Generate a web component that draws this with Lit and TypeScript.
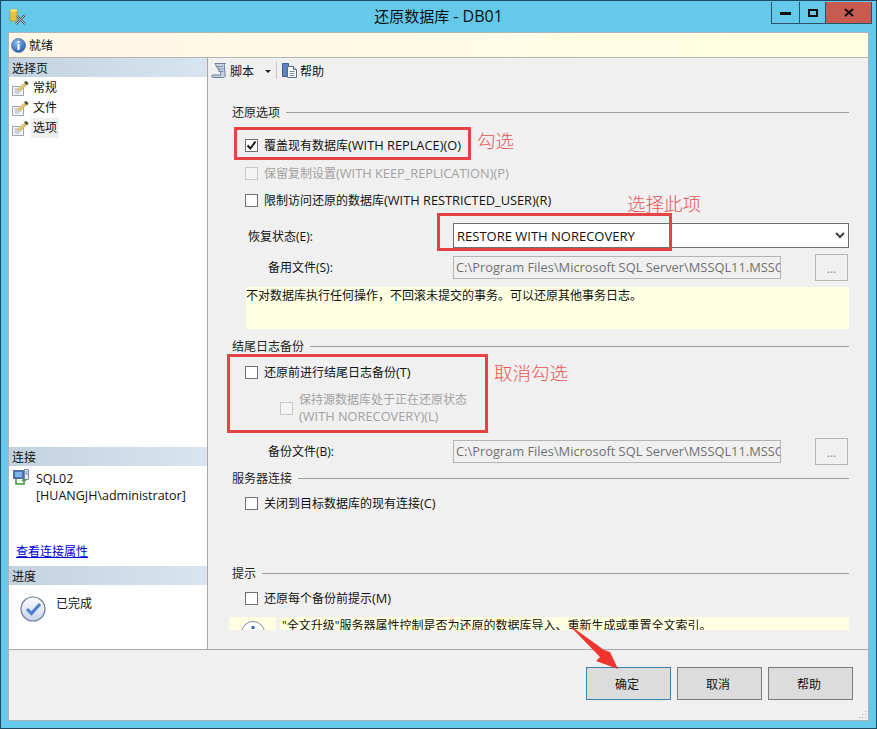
import { LitElement, html, css, svg } from "lit";
import { customElement } from "lit/decorators.js";

const navIcon = svg`<svg width="17" height="15" viewBox="0 0 17 15">
  <path d="M.5 5.500h11v9H.5z" fill="#f6f8fa" stroke="#97a2ac"/>
  <path d="M2.500 8h7M2.500 10h7M2.500 12h5" stroke="#a4adb6"/>
  <path d="M5 8.500 10.500 3l3-1.500 1 2.500-5.500 5.500-3 .5z" fill="#dcbc62"/>
  <path d="M6.500 8.500 12 3.500" stroke="#f2e09c" stroke-width=".8"/>
  <path d="M12 1l2-1 2.500 2-1.500 2.500z" fill="#4e4c30"/>
</svg>`;

const check = svg`<svg width="11" height="11" viewBox="0 0 11 11"><path d="M1.500 5.500 4.300 8.500 9.500 1.500" fill="none" stroke="#1a1a1a" stroke-width="2"/></svg>`;

const chevron = svg`<svg width="10" height="7" viewBox="0 0 10 7"><path d="M1 1l4 4 4-4" fill="none" stroke="#404040" stroke-width="2"/></svg>`;

/* Latin runs read a little larger than the CJK ones in the reference. */
const mixed = (s: string) =>
  s.split(/([\u0000-\u024f]+)/).map((p) => (/[A-Za-z0-9]/.test(p) ? html`<span class="la">${p}</span>` : p));

@customElement("app-root")
export class AppRoot extends LitElement {
  static styles = css`
    :host {
      display: block;
      width: 877px;
      height: 729px;
      position: relative;
      overflow: hidden;
      font-family: "Open Sans", "Noto Sans CJK SC", sans-serif;
      font-size: 12px;
      color: #111;
    }
    .la { font-size: 12.8px; }
    .win {
      width: 877px;
      height: 729px;
      box-sizing: border-box;
      background: #65c9ea;
      border: 1px solid #1c4a60;
      display: flex;
      flex-direction: column;
      padding: 0 7px 7px 7px;
    }
    .title {
      height: 31px;
      flex: none;
      display: flex;
      align-items: flex-start;
      position: relative;
      margin: 0 -7px;
      padding-left: 8px;
    }
    .app-ico { margin-top: 7px; }
    .title-text {
      position: absolute;
      left: 0;
      right: 0;
      top: 5px;
      text-align: center;
      font-size: 15px;
      line-height: 20px;
      color: #111;
    }
    .title-text .la { font-size: 16px; }
    .ctl {
      position: absolute;
      top: 1px;
      right: 4px;
      display: flex;
      height: 21px;
      border: 1px solid #2a5468;
      border-top: none;
    }
    .ctl div {
      display: flex;
      align-items: center;
      justify-content: center;
      box-sizing: border-box;
    }
    .ctl .min { width: 28px; border-right: 1px solid #2a5468; }
    .ctl .max { width: 26px; border-right: 1px solid #2a5468; }
    .ctl .close { width: 45px; background: #c75b50; }
    .client {
      flex: 1;
      background: #f0f0f0;
      border: 1px solid #a9b5bb;
      display: flex;
      flex-direction: column;
      min-height: 0;
    }
    .status {
      height: 25px;
      flex: none;
      box-sizing: border-box;
      background: linear-gradient(90deg, #fff6e6 0, #fffbe4 60%, #ffffe1 85%);
      border-bottom: 1px solid #b4b4b4;
      display: flex;
      align-items: center;
      padding-left: 2px;
      gap: 3px;
    }
    .main { flex: 1; display: flex; min-height: 0; border-bottom: 1px solid #a8a8a8; }
    .side {
      width: 199px;
      flex: none;
      box-sizing: border-box;
      background: #fff;
      border-right: 1px solid #a8a8a8;
      display: flex;
      flex-direction: column;
    }
    .sec-h {
      height: 19px;
      flex: none;
      line-height: 21px;
      padding-left: 3px;
      background: linear-gradient(90deg, #c3d2df, #d8e5f1);
      color: #111;
    }
    .nav { flex: 1; padding-top: 1px; }
    .nav-row { height: 20px; display: flex; align-items: center; padding-left: 3px; }
    .nav-row .lbl { margin-left: 2px; padding: 0 2px; line-height: 20px; }
    .nav-row .lbl.sel { background: #eeeeee; }
    .conn { height: 100px; flex: none; display: flex; flex-direction: column; }
    .conn-top { display: flex; padding: 3px 0 0 4px; gap: 7px; }
    .conn-txt { line-height: 17px; padding-top: 1px; }
    .conn-txt .la { font-size: 12.5px; }
    .link { margin: 40px 0 0 7px; color: #0000d8; text-decoration: underline; line-height: 16px; }
    .prog { height: 64px; box-sizing: border-box; flex: none; display: flex; padding: 11px 0 0 11px; gap: 10px; }
    .prog-ico { width: 26px; height: 26px; }
    .prog-txt { line-height: 17px; margin-top: -1px; }
    .pane { flex: 1; display: flex; flex-direction: column; min-width: 0; }
    .toolbar { height: 27px; flex: none; display: flex; align-items: center; padding: 0 0 2px 3px; box-sizing: border-box; }
    .toolbar .t { margin-left: 3px; }
    .toolbar .h { margin-left: 2px; }
    .caret {
      width: 0; height: 0;
      border: 3px solid transparent;
      border-top-color: #222;
      border-bottom: none;
      margin: 2px 5px 0 11px;
    }
    .tsep { width: 1px; height: 17px; background: #c4c4c4; margin-right: 5px; }
    .form { flex: 1; display: flex; flex-direction: column; padding: 0 19px 0 24px; min-height: 0; }
    .hdr { height: 16px; flex: none; display: flex; align-items: center; gap: 6px; line-height: 16px; color: #222; }
    .hdr span { padding-top: 2px; }
    .hdr i { flex: 1; height: 1px; background: #a0a0a0; }
    .g1 { margin-top: 19px; }
    .g2 { margin-top: 9px; }
    .g3 { margin-top: 5px; }
    .g4 { margin-top: 52px; }
    .chk { height: 20px; flex: none; display: flex; align-items: center; padding-left: 13px; gap: 6px; line-height: 20px; }
    .chk .lb { padding-top: 1px; }
    .c1 { margin-top: 15px; }
    .c2 { margin-top: 8px; }
    .c3 { margin-top: 7px; }
    .c4 { margin-top: 7px; }
    .box {
      width: 11px; height: 11px;
      flex: none;
      border: 1px solid #707070;
      background: #fff;
      display: flex;
      align-items: center;
      justify-content: center;
    }
    .off { color: #a2a2a2; }
    .off .box { border-color: #c8c8c8; background: #f4f4f4; }
    .nested {
      height: 34px;
      margin-top: 9px;
      flex: none;
      display: flex;
      align-items: center;
      padding-left: 48px;
      gap: 6px;
      line-height: 17.5px;
    }
    .status-row { height: 25px; margin-top: 13px; flex: none; display: flex; align-items: center; padding-left: 16px; }
    .status-row .lab { width: 205px; flex: none; }
    .select {
      flex: 1;
      height: 25px;
      box-sizing: border-box;
      border: 1px solid #707070;
      background: #fff;
      display: flex;
      align-items: center;
      justify-content: space-between;
      padding: 0 3px 0 3px;
      font-size: 13px;
      color: #111;
    }
    .file-row { height: 27px; flex: none; display: flex; align-items: center; padding-left: 36px; }
    .f1 { margin-top: 6px; }
    .f2 { margin-top: 13px; }
    .file-row .lab { width: 185px; flex: none; margin-bottom: 2px; }
    .input {
      width: 328px;
      height: 23px;
      box-sizing: border-box;
      border: 1px solid #b4b4b4;
      background: #f0f0f0;
      color: #707070;
      font-size: 12.85px;
      line-height: 21px;
      padding-left: 2px;
      white-space: nowrap;
      overflow: hidden;
      flex: none;
    }
    .dots {
      width: 33px;
      height: 27px;
      margin-left: 34px;
      box-sizing: border-box;
      border: 1px solid #b4b4b4;
      color: #8a8a8a;
      text-align: center;
      line-height: 27px;
      flex: none;
    }
    .note {
      height: 42px;
      margin: 6px 0 0 14px;
      flex: none;
      background: #ffffe1;
      line-height: 18px;
      color: #111;
    }
    .tip { height: 13px; margin: 9px 0 0 -3px; display: flex; overflow: hidden; flex: none; }
    .tip-ico { width: 47px; flex: none; background: #ffffe1; display: flex; justify-content: center; padding-top: 4px; box-sizing: border-box; }
    .tip-txt { flex: 1; margin-left: 4px; background: #ffffe1; line-height: 17px; padding-left: 2px; white-space: nowrap; }
    .foot {
      height: 70px;
      flex: none;
      display: flex;
      justify-content: flex-end;
      gap: 6px;
      padding: 17px 15px 0 0;
      box-sizing: border-box;
      position: relative;
    }
    .btn {
      width: 85px;
      height: 33px;
      box-sizing: border-box;
      border: 1px solid #7a7a7a;
      background: #dcdcdc;
      text-align: center;
      line-height: 33px;
      padding-right: 3px;
      color: #111;
    }
    .btn.def { border-color: #3c7fb1; }
    .grip { position: absolute; right: 1px; bottom: 1px; }
    .mark { position: absolute; box-sizing: border-box; border: 3px solid #e84344; pointer-events: none; }
    .m1 { left: 234px; top: 127px; width: 237px; height: 33px; }
    .m2 { left: 437px; top: 213px; width: 235px; height: 38px; }
    .m3 { left: 227px; top: 354px; width: 261px; height: 79px; }
    .note-red { position: absolute; color: #e65557; font-size: 18.5px; line-height: 24px; font-family: "Noto Sans CJK SC", sans-serif; font-weight: 300; }
    .n1 { left: 477px; top: 128px; }
    .n2 { left: 627px; top: 191px; }
    .n3 { left: 494px; top: 360px; }
    .arrow { position: absolute; left: 560px; top: 615px; }
  `;

  private row(label: string, cls: string, on = false) {
    return html`<div class="chk ${cls}"><span class="box">${on ? check : ""}</span><span class="lb">${mixed(label)}</span></div>`;
  }

  private hdr(label: string, cls: string) {
    return html`<div class="hdr ${cls}"><span>${label}</span><i></i></div>`;
  }

  render() {
    return html`
      <div class="win">
        <div class="title">
          <svg class="app-ico" width="17" height="17" viewBox="0 0 17 17">
            <path d="M1 2.500C1 1 8 1 8 2.500V12C8 13.500 1 13.500 1 12z" fill="#e8c040" stroke="#a88820" stroke-width=".6"/>
            <ellipse cx="4.500" cy="2.500" rx="3.500" ry="1.200" fill="#f6e27a"/>
            <path d="M7 16 16 7M8 8l8 8" stroke="#4a4a4a" stroke-width="2"/>
            <path d="M7 16 16 7M8 8l8 8" stroke="#e8e8e8" stroke-width=".8"/>
            <path d="M1 15h1M3 16h1M9 1h1M12 3v1" stroke="#5cc05c"/>
          </svg>
          <div class="title-text">${mixed("还原数据库 - DB01")}</div>
          <div class="ctl">
            <div class="min"><svg width="11" height="4" viewBox="0 0 11 4"><rect width="11" height="3" y="1" fill="#111"/></svg></div>
            <div class="max"><svg width="10" height="8" viewBox="0 0 10 8"><path d="M1 1h8v6H1z" fill="none" stroke="#111" stroke-width="2"/></svg></div>
            <div class="close"><svg width="10" height="9" viewBox="0 0 10 9"><path d="M1 1l8 7M9 1 1 8" stroke="#111" stroke-width="2.200"/></svg></div>
          </div>
        </div>
        <div class="client">
          <div class="status">
            <svg width="15" height="15" viewBox="0 0 15 15">
              <defs><radialGradient id="ig" cx=".4" cy=".3" r=".8"><stop offset="0" stop-color="#8fc0f0"/><stop offset="1" stop-color="#1c4fa8"/></radialGradient></defs>
              <circle cx="7.500" cy="7.500" r="7" fill="url(#ig)" stroke="#5b7aa0" stroke-width=".8"/>
              <path d="M6.500 3h2v2h-2zM6.500 6h2v6h-2z" fill="#fff"/>
            </svg>
            <span>就绪</span>
          </div>
          <div class="main">
            <div class="side">
              <div class="sec-h">选择页</div>
              <div class="nav">
                <div class="nav-row">${navIcon}<span class="lbl">常规</span></div>
                <div class="nav-row">${navIcon}<span class="lbl">文件</span></div>
                <div class="nav-row">${navIcon}<span class="lbl sel">选项</span></div>
              </div>
              <div class="sec-h">连接</div>
              <div class="conn">
                <div class="conn-top">
                  <svg width="16" height="17" viewBox="0 0 16 17">
                    <path d="M.5 1.500h10v8H.5z" fill="#3f74cf" stroke="#5a6a80"/>
                    <path d="M2 3h7v5H2z" fill="#7fb0ee"/>
                    <path d="M11.500 .5h4v10h-4z" fill="#e6ecf4" stroke="#7a8aa0"/>
                    <path d="M12.500 3h2M12.500 5h2" stroke="#3f74cf"/>
                    <path d="M3 10v5h8V11" fill="none" stroke="#3a9a3a" stroke-width="1.500"/>
                    <path d="M9 12l2-2 2 2" fill="none" stroke="#3a9a3a" stroke-width="1.200"/>
                  </svg>
                  <div class="conn-txt"><span class="la">SQL02</span><br /><span class="la">[HUANGJH\\administrator]</span></div>
                </div>
                <div class="link">查看连接属性</div>
              </div>
              <div class="sec-h">进度</div>
              <div class="prog">
                <svg class="prog-ico" viewBox="0 0 26 26">
                  <defs><linearGradient id="cg" x1="0" y1="0" x2="0" y2="1"><stop offset="0" stop-color="#fdfdff"/><stop offset="1" stop-color="#c8d4ea"/></linearGradient></defs>
                  <circle cx="13" cy="13" r="12" fill="url(#cg)" stroke="#6a7a98" stroke-width="1.200"/>
                  <path d="M7 13l4.500 4.500L20 8" fill="none" stroke="#4a7fd0" stroke-width="3"/>
                </svg>
                <div class="prog-txt">已完成</div>
              </div>
            </div>
            <div class="pane">
              <div class="toolbar">
                <svg width="16" height="17" viewBox="0 0 16 17">
                  <path d="M4 1.500h10.500c-1.500 1-1.500 2 -1 3.500l.5 7c.5 2 0 3-1.500 3.500H2c-1.500-.5-1.500-2-.5-2.500h8.500c-.5-1-.5-2-.5-3L5 4C5 3 4.500 2 4 1.500z" fill="#c8d3e2" stroke="#5f7390" stroke-width=".9"/>
                  <path d="M6 4.500h6M6.500 7h6M7 9.500h5.500" stroke="#5f7390" stroke-width=".7"/>
                </svg>
                <span class="t">脚本</span>
                <span class="caret"></span>
                <span class="tsep"></span>
                <svg width="16" height="17" viewBox="0 0 16 17">
                  <path d="M.5 1.500h6v13h-6z" fill="#5a84c4" stroke="#3f5f90"/>
                  <path d="M5.500 4.500h6l3 3v8h-9z" fill="#fff" stroke="#5a6a80"/>
                  <path d="M11.500 4.500v3h3" fill="#d8e4f4" stroke="#5a6a80"/>
                  <path d="M7.500 9.500h5M7.500 11.500h5M7.500 13.500h5" stroke="#7a8aa0"/>
                </svg>
                <span class="h">帮助</span>
              </div>
              <div class="form">
                ${this.hdr("还原选项", "g1")}
                ${this.row("覆盖现有数据库(WITH REPLACE)(O)", "c1", true)}
                ${this.row("保留复制设置(WITH KEEP_REPLICATION)(P)", "c2 off")}
                ${this.row("限制访问还原的数据库(WITH RESTRICTED_USER)(R)", "c3")}
                <div class="status-row">
                  <span class="lab">恢复状态(E):</span>
                  <div class="select"><span>RESTORE WITH NORECOVERY</span>${chevron}</div>
                </div>
                <div class="file-row f1">
                  <span class="lab">备用文件(S):</span>
                  <div class="input">C:\\Program Files\\Microsoft SQL Server\\MSSQL11.MSSQ</div>
                  <div class="dots">...</div>
                </div>
                <div class="note">不对数据库执行任何操作，不回滚未提交的事务。可以还原其他事务日志。</div>
                ${this.hdr("结尾日志备份", "g2")}
                ${this.row("还原前进行结尾日志备份(T)", "c2")}
                <div class="nested off">
                  <span class="box"></span>
                  <span>保持源数据库处于正在还原状态<br /><span class="la">(WITH NORECOVERY)(L)</span></span>
                </div>
                <div class="file-row f2">
                  <span class="lab">备份文件(B):</span>
                  <div class="input">C:\\Program Files\\Microsoft SQL Server\\MSSQL11.MSSQ</div>
                  <div class="dots">...</div>
                </div>
                ${this.hdr("服务器连接", "g3")}
                ${this.row("关闭到目标数据库的现有连接(C)", "c4")}
                ${this.hdr("提示", "g4")}
                ${this.row("还原每个备份前提示(M)", "c4")}
                <div class="tip">
                  <div class="tip-ico">
                    <svg width="24" height="24" viewBox="0 0 24 24">
                      <circle cx="12" cy="12" r="11.500" fill="#fff" stroke="#7a8aa8"/>
                      <rect x="10.500" y="5" width="3" height="3" fill="#3a64b0"/>
                    </svg>
                  </div>
                  <div class="tip-txt">"全文升级"服务器属性控制是否为还原的数据库导入、重新生成或重置全文索引。</div>
                </div>
              </div>
            </div>
          </div>
          <div class="foot">
            <div class="btn def">确定</div>
            <div class="btn">取消</div>
            <div class="btn">帮助</div>
            <svg class="grip" width="10" height="10" viewBox="0 0 10 10">
              <path d="M8 2h1v1H8zM5 5h1v1H5zM8 5h1v1H8zM2 8h1v1H2zM5 8h1v1H5zM8 8h1v1H8z" fill="#b0b0b0"/>
            </svg>
          </div>
        </div>
      </div>
      <div class="mark m1"></div>
      <div class="mark m2"></div>
      <div class="mark m3"></div>
      <div class="note-red n1">勾选</div>
      <div class="note-red n2">选择此项</div>
      <div class="note-red n3">取消勾选</div>
      <svg class="arrow" width="64" height="60" viewBox="0 0 64 60">
        <path d="M8 9 44 35 50 37 58 54 36 46 40 42z" fill="#f0352f"/>
      </svg>
    `;
  }
}
